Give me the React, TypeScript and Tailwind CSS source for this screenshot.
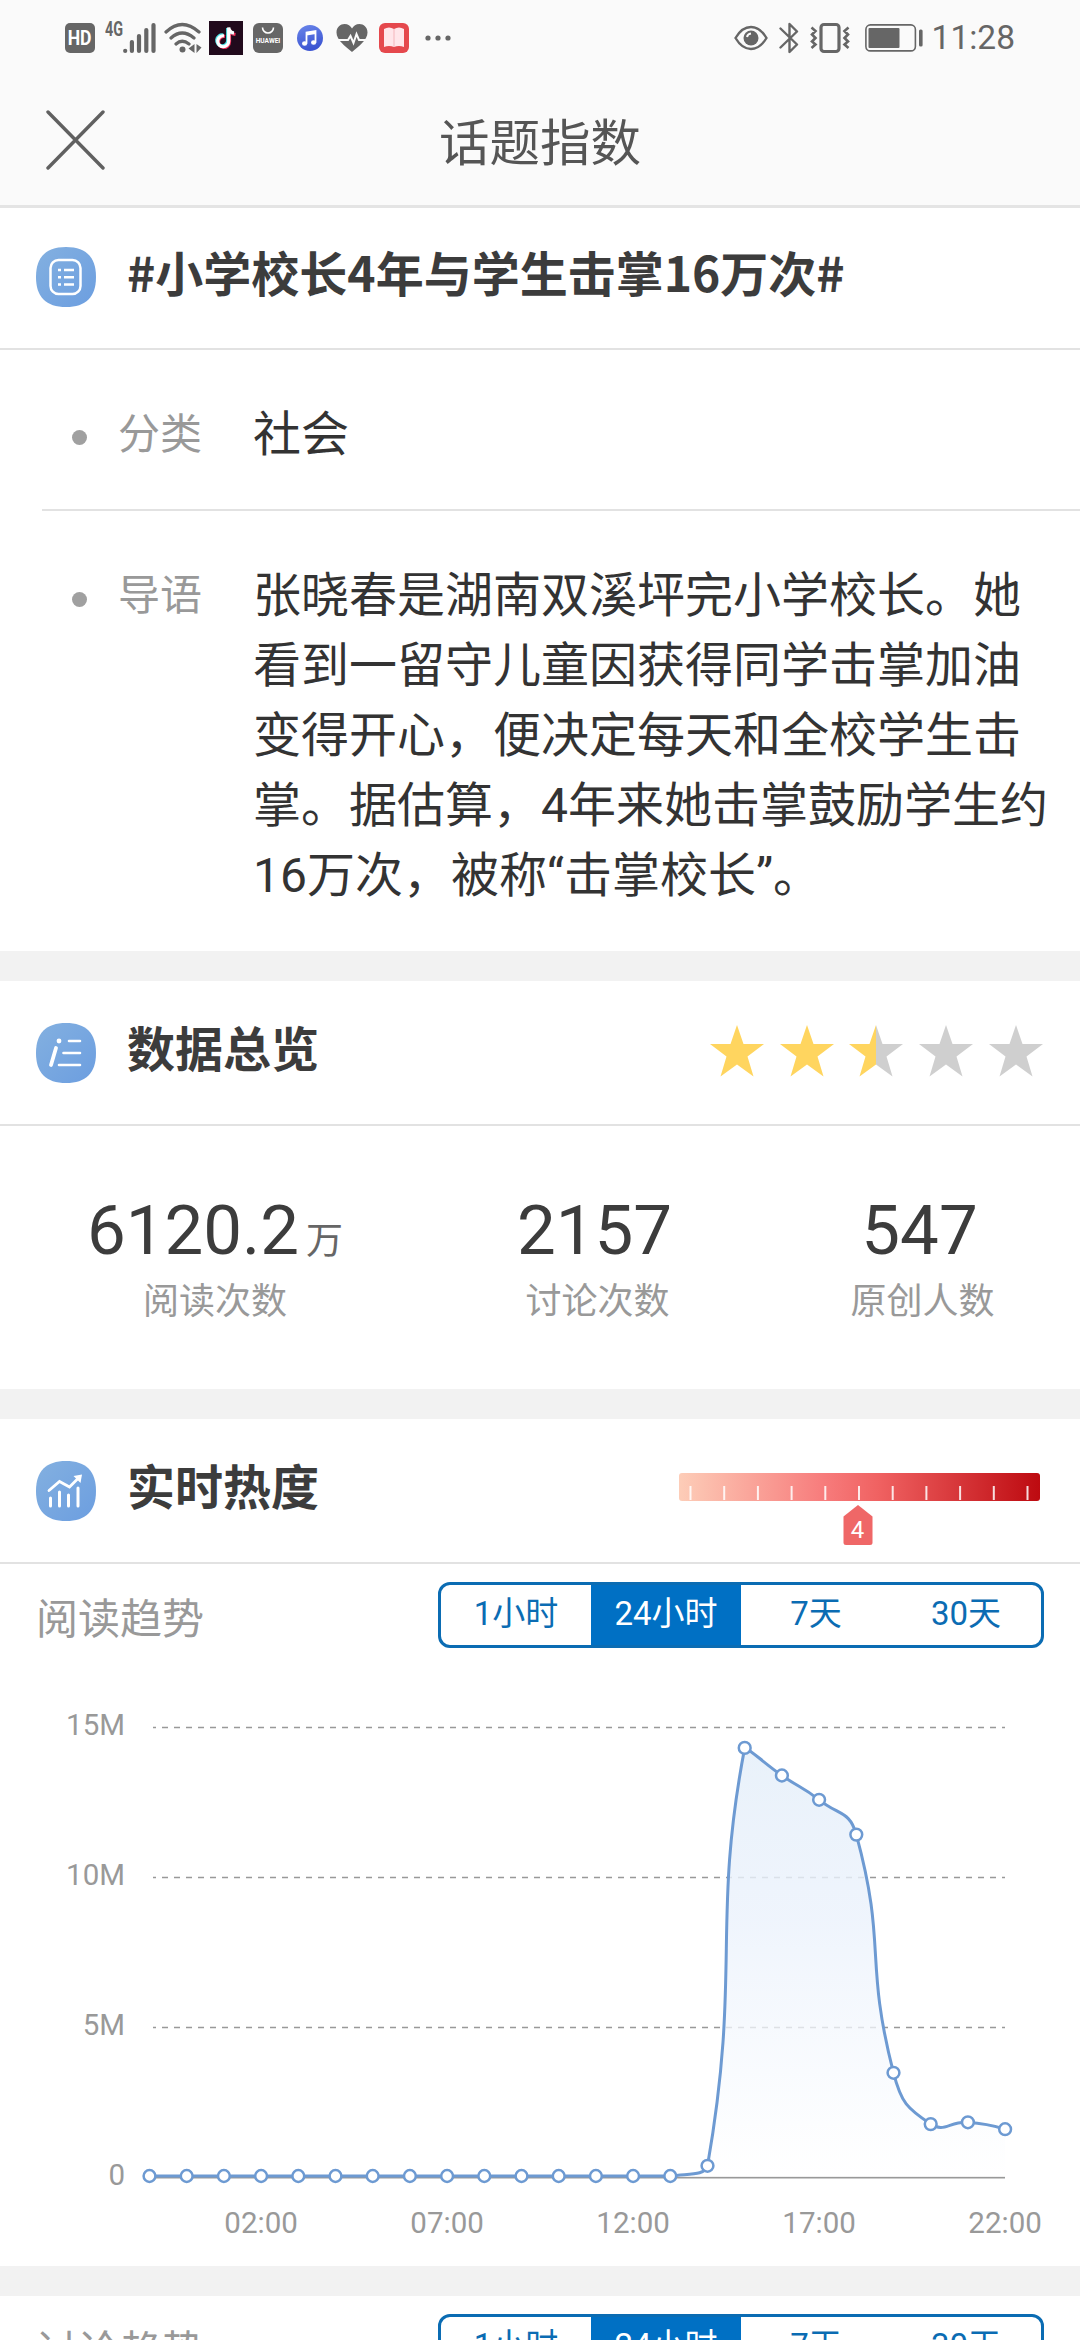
import type {FC, ReactNode} from "react";
import clsx from "clsx";

type Point = {x: number; y: number};

type SectionHeaderProps = {
	icon: ReactNode;
	title: string;
	titleClassName?: string;
	children?: ReactNode;
};

type TrendProps = {
	title: string;
	selected: string;
};

const RANGES = ["1小时", "24小时", "7天", "30天"];

const STATS = [
	{value: "6120.2", unit: "万", label: "阅读次数", width: "w-[430px]"},
	{value: "2157", unit: "", label: "讨论次数", width: "w-[335px]"},
	{value: "547", unit: "", label: "原创人数", width: "w-[315px]"},
];

const STARS = [1, 1, 0.5, 0, 0];

const INTRO = [
	"张晓春是湖南双溪坪完小学校长。她",
	"看到一留守儿童因获得同学击掌加油",
	"变得开心，便决定每天和全校学生击",
	"掌。据估算，4年来她击掌鼓励学生约",
	"16万次，被称“击掌校长”。",
];

// reads per hour, in millions
const READS = [
	0, 0, 0, 0, 0, 0, 0, 0, 0, 0, 0, 0, 0, 0, 0, 0.34, 14.27, 13.35, 12.54,
	11.38, 3.44, 1.73, 1.79, 1.56,
];

const X_LABELS = [
	{text: "02:00", index: 3},
	{text: "07:00", index: 8},
	{text: "12:00", index: 13},
	{text: "17:00", index: 18},
	{text: "22:00", index: 23},
];

const Y_LABELS = [
	{text: "15M", value: 15},
	{text: "10M", value: 10},
	{text: "5M", value: 5},
	{text: "0", value: 0},
];

// Smoothed line; control points stay between the lowest and highest value.
const smoothPath = (pts: Point[], smooth = 0.5) => {
	const top = Math.min(...pts.map((p) => p.y));
	const bottom = Math.max(...pts.map((p) => p.y));
	const limit = (y: number) => Math.max(top, Math.min(bottom, y));

	let d = `M${pts[0].x} ${pts[0].y}`;
	let out = pts[0];
	for (let i = 1; i < pts.length; i++) {
		const prev = pts[i - 1];
		const cur = pts[i];
		const next = pts[i + 1];
		let into = cur;
		let nextOut = cur;
		if (next) {
			const vx = (next.x - prev.x) * smooth;
			const vy = (next.y - prev.y) * smooth;
			const lenPrev = Math.hypot(cur.x - prev.x, cur.y - prev.y);
			const lenNext = Math.hypot(next.x - cur.x, next.y - cur.y);
			const before = lenPrev / (lenPrev + lenNext);
			const after = lenNext / (lenPrev + lenNext);
			into = {x: cur.x - vx * before, y: limit(cur.y - vy * before)};
			nextOut = {x: cur.x + vx * after, y: limit(cur.y + vy * after)};
		}
		d += `C${out.x} ${out.y} ${into.x} ${into.y} ${cur.x} ${cur.y}`;
		out = nextOut;
	}
	return d;
};

const StatusBar: FC = () => {
	return (
		<div className="flex h-[76px] items-center pl-[65px] pr-[65px] text-[#666]">
			<div className="flex h-[30px] w-[30px] items-center justify-center rounded-[5px] bg-[#666] font-['Roboto',sans-serif] text-[20px] font-bold leading-none text-white">
				<span className="scale-x-[0.88]">HD</span>
			</div>
			<span className="mb-[18px] ml-[10px] w-[18px] font-['Roboto',sans-serif] text-[20px] font-bold leading-none">
				<span className="inline-block origin-left scale-x-[0.72]">4G</span>
			</span>
			<svg width="33" height="32" viewBox="0 0 33 32" stroke="currentColor" strokeWidth="4.2" strokeLinecap="round">
				<path d="M2.2 28.8v.2M8.9 20v9M16 14v15M23.3 8v21M30.5 3v26" />
			</svg>
			<svg className="ml-2" width="39" height="32" viewBox="0 0 39 32" fill="none" stroke="currentColor" strokeWidth="3.2" strokeLinecap="round">
				<path d="M2 10Q18 -5 35 10M7 16Q18 6 30 16M12 22Q18 16.5 25 22" />
				<circle cx="18.5" cy="27.5" r="3" fill="currentColor" stroke="none" />
				<path d="M30.5 22v9l-6-4.500zM32.500 22v9l5-5.500z" fill="currentColor" stroke="none" />
			</svg>
			<svg className="ml-[6px]" width="34" height="34" viewBox="0 0 34 34">
				<rect width="34" height="34" fill="#210a1c" />
				<g fill="none" strokeWidth="3.2">
					<path d="M16 15.500a5.500 5.500 0 1 0 4.500 5.500V8.500q1 4.500 6 5" stroke="#f0305a" />
					<path d="M14.200 14a5.500 5.500 0 1 0 4.500 5.500V7q1 4.500 6 5" stroke="#4fe3e6" />
					<path d="M15 14.800a5.500 5.500 0 1 0 4.700 5.300V6.500q1 5 5.300 5.500" stroke="#fff" />
				</g>
			</svg>
			<svg className="ml-[10px]" width="30" height="30" viewBox="0 0 30 30">
				<rect width="30" height="30" rx="6" fill="#666" />
				<path d="M9.500 4.500a5.500 5.500 0 0 0 11 0" fill="none" stroke="#fff" strokeWidth="1.600" />
				<text x="15" y="20" fontSize="6.600" fontWeight="700" textAnchor="middle" fill="#fff" fontFamily="Roboto, sans-serif">
					HUAWEI
				</text>
			</svg>
			<svg className="ml-[14px]" width="26" height="26" viewBox="0 0 26 26">
				<defs>
					<linearGradient id="music" x1="0" y1="0" x2="0.300" y2="1">
						<stop offset="0" stopColor="#6a86ea" />
						<stop offset="1" stopColor="#3c55d2" />
					</linearGradient>
				</defs>
				<circle cx="13" cy="13" r="13" fill="url(#music)" />
				<path d="M9.500 18.500V7.500l9-1.500v11.500M9.500 9.500l9-1.500" fill="none" stroke="#fff" strokeWidth="1.800" />
				<ellipse cx="7.600" cy="18.500" rx="2.600" ry="2.200" fill="#fff" />
				<ellipse cx="16.600" cy="17.500" rx="2.600" ry="2.200" fill="#fff" />
			</svg>
			<svg className="ml-[13px]" width="32" height="30" viewBox="0 0 32 30">
				<path d="M16 29C9 23 .5 17 .5 9.500C.5 4 4.500 1 8.500 1C12 1 14.500 3 16 5.500C17.500 3 20 1 23.500 1C27.500 1 31.500 4 31.500 9.500C31.500 17 23 23 16 29Z" fill="currentColor" />
				<path d="M1 17h11l2.500-4 3 7 3-9 2.500 6h8" fill="none" stroke="#fafafa" strokeWidth="2" />
			</svg>
			<svg className="ml-[11px]" width="30" height="30" viewBox="0 0 30 30">
				<rect width="30" height="30" rx="6" fill="#e5484d" />
				<path d="M5 6q5-3 10 0q5-3 10 0v18q-5-2-10 0q-5-2-10 0z" fill="#ffe6ea" />
				<path d="M15 6v18" stroke="#f4b6bc" strokeWidth="1" />
			</svg>
			<svg className="ml-4" width="26" height="6" viewBox="0 0 26 6" fill="currentColor">
				<circle cx="3" cy="3" r="2.600" />
				<circle cx="13" cy="3" r="2.600" />
				<circle cx="23" cy="3" r="2.600" />
			</svg>
			<div className="ml-auto flex items-center">
				<svg width="34" height="26" viewBox="0 0 34 26" fill="none" stroke="currentColor" strokeWidth="2.400">
					<path d="M1.500 13Q8 2 17 2T32.500 13Q26 24 17 24T1.500 13Z" />
					<circle cx="17" cy="13" r="7.500" fill="currentColor" stroke="none" />
					<path d="M13 12q.5-3 4-3.500" stroke="#fafafa" strokeWidth="2" />
				</svg>
				<svg className="ml-[11px]" width="20" height="32" viewBox="0 0 20 32" fill="none" stroke="currentColor" strokeWidth="2.400" strokeLinejoin="round" strokeLinecap="round">
					<path d="M1.500 6.500L18 22.500L10.500 30V2L18 9.500L1.500 25.500" />
				</svg>
				<svg className="ml-[11px]" width="40" height="32" viewBox="0 0 40 32" fill="none" stroke="currentColor" strokeWidth="3.200">
					<rect x="11" y="2.500" width="18" height="27" rx="3" />
					<path d="M1.500 5.500l4 3.500-3.500 3.500 3.500 3.500-3.500 3.500 3.500 3-4 3.500M38.500 5.500l-4 3.500 3.500 3.500-3.500 3.500 3.500 3.500-3.500 3 4 3.500" strokeWidth="2.600" />
				</svg>
				<svg className="ml-[15px]" width="58" height="28" viewBox="0 0 58 28">
					<rect x=".9" y=".9" width="49.500" height="26" rx="4.500" fill="none" stroke="currentColor" strokeWidth="1.600" />
					<rect x="3.500" y="4" width="31" height="20" rx="1" fill="currentColor" />
					<rect x="54" y="5.500" width="3.600" height="17" rx="1.500" fill="currentColor" />
				</svg>
				<span className="ml-[9px] font-['Roboto',sans-serif] text-[33.500px] leading-none">11:28</span>
			</div>
		</div>
	);
};

const IconBadge: FC<{id: string; children: ReactNode}> = ({id, children}) => {
	return (
		<svg width="60" height="60" viewBox="0 0 60 60" fill="none" stroke="#fff">
			<defs>
				<linearGradient id={id} x1="0" y1="0" x2="1" y2="1">
					<stop offset="0" stopColor="#83b0e0" />
					<stop offset="1" stopColor="#6c9ee0" />
				</linearGradient>
			</defs>
			<path d="M30 0C50 0 60 10 60 30S50 60 30 60S0 50 0 30S10 0 30 0Z" fill={`url(#${id})`} stroke="none" />
			{children}
		</svg>
	);
};

const SectionHeader: FC<SectionHeaderProps> = ({
	icon,
	title,
	titleClassName = "mb-[4px]",
	children,
}) => {
	return (
		<div className="flex h-[145px] items-center border-b-2 border-[#e2e2e2] pl-9 pr-9">
			{icon}
			<h2
				className={clsx(
					"ml-[31px] text-[48px] font-bold leading-none text-[#3c3c3c]",
					titleClassName,
				)}
			>
				{title}
			</h2>
			{children}
		</div>
	);
};

const Star: FC<{fill: number; id: string}> = ({fill, id}) => {
	return (
		<svg width="56" height="52" viewBox="0 0 56 52">
			<defs>
				<linearGradient id={id}>
					<stop offset={fill} stopColor="#ffd55f" />
					<stop offset={fill} stopColor="#cfcfcf" />
				</linearGradient>
			</defs>
			<path
				d="M28 0L34.500 19H55L38.500 31.500L44.500 51.500L28 39.500L11.500 51.500L17.500 31.500L1 19H21.500Z"
				fill={`url(#${id})`}
			/>
		</svg>
	);
};

const HeatBar: FC = () => {
	return (
		<svg className="ml-auto mt-[40px]" width="365" height="76" viewBox="0 0 365 76">
			<defs>
				<linearGradient id="heat">
					<stop offset="0" stopColor="#fdcdb8" />
					<stop offset=".4" stopColor="#f77c7c" />
					<stop offset=".55" stopColor="#f06262" />
					<stop offset="1" stopColor="#bd0a10" />
				</linearGradient>
			</defs>
			<rect width="361" height="28" rx="3" fill="url(#heat)" />
			{Array.from({length: 11}, (_, i) => (
				<rect key={i} x={10.500 + i * 33.700} y="13" width="2" height="14" fill="#fff" opacity=".85" />
			))}
			<path
				d="M179 32L193.500 43.500V69.500Q193.500 72 191 72H167Q164.500 72 164.500 69.500V43.500Z"
				fill="#ef6767"
			/>
			<text x="178.500" y="65" fontSize="24" textAnchor="middle" fill="#fff" fontFamily="Roboto, sans-serif">
				4
			</text>
		</svg>
	);
};

const TrendHeader: FC<TrendProps> = ({title, selected}) => {
	return (
		<div className="flex items-start pl-9 pr-9 pt-[18px]">
			<span className="mt-[17px] text-[42px] leading-[42px] text-[#999]">{title}</span>
			<div className="ml-auto flex h-[66px] w-[606px] overflow-hidden rounded-[12px] border-[3px] border-[#0b6cb3]">
				{RANGES.map((range) => (
					<button
						key={range}
						type="button"
						className={clsx(
							"flex-1 pb-[3px] text-[33px] leading-none",
							range === selected
								? "bg-[#0070c4] text-white"
								: "text-[#0b6cb3]",
						)}
					>
						{range}
					</button>
				))}
			</div>
		</div>
	);
};

const TrendChart: FC = () => {
	const left = 149.500;
	const step = 37.200;
	const base = 529;
	const points = READS.map((v, i) => ({x: left + i * step, y: base - 1 - v * 30}));
	const line = smoothPath(points);

	return (
		<svg className="block" width="1080" height="618" viewBox="0 0 1080 618">
			<defs>
				<linearGradient id="area" x1="0" y1="0" x2="0" y2="1">
					<stop offset="0" stopColor="#e5eff9" stopOpacity=".85" />
					<stop offset=".4" stopColor="#ebf2fc" stopOpacity=".8" />
					<stop offset="1" stopColor="#ffffff" stopOpacity=".7" />
				</linearGradient>
			</defs>
			{Y_LABELS.map(({text, value}) => (
				<g key={text}>
					<text
						x="125"
						y={base + 7.500 - value * 30}
						fontSize="29.500"
						textAnchor="end"
						fill="#999"
						fontFamily="Roboto, sans-serif"
					>
						{text}
					</text>
					<path
						d={`M153 ${base + 0.500 - value * 30}H1005`}
						stroke="#999"
						strokeWidth={value === 0 ? 2 : 1.500}
						strokeDasharray={value === 0 ? undefined : "6 6"}
						strokeDashoffset="3"
					/>
				</g>
			))}
			<path d={`${line}V${base}H${left}Z`} fill="url(#area)" />
			<path d={line} fill="none" stroke="#6d9ad2" strokeWidth="3" strokeLinejoin="bevel" />
			{points.map((p) => (
				<circle key={p.x} cx={p.x} cy={p.y} r="5.900" fill="#fff" stroke="#6d9ad2" strokeWidth="2.500" />
			))}
			{X_LABELS.map(({text, index}) => (
				<text
					key={text}
					x={left + index * step}
					y="585"
					fontSize="29.500"
					textAnchor="middle"
					fill="#999"
					fontFamily="Roboto, sans-serif"
				>
					{text}
				</text>
			))}
		</svg>
	);
};

const Gap: FC = () => <div className="h-[30px] bg-[#f2f2f2]" />;

const App: FC = () => {
	return (
		<div className="h-[2340px] w-[1080px] overflow-hidden bg-white font-['Roboto','Noto_Sans_CJK_SC',sans-serif]">
			<header className="h-[208px] border-b-[3px] border-[#e4e4e4] bg-[#fafafa]">
				<StatusBar />
				<div className="grid h-[128px] grid-cols-[1fr_auto_1fr] items-center">
					<svg className="ml-[46px]" width="59" height="60" viewBox="0 0 59 60" stroke="#606060" strokeWidth="3.400" strokeLinecap="round">
						<path d="M2 2l55 56M57 2L2 58" />
					</svg>
					<h1 className="pt-[9px] text-[50.500px] leading-none text-[#555]">话题指数</h1>
				</div>
			</header>

			<div className="-mt-[3px]">
				<SectionHeader
					title="#小学校长4年与学生击掌16万次#"
					titleClassName="mb-[12px] font-['Noto_Sans_CJK_SC',sans-serif]"
					icon={
						<IconBadge id="badge-topic">
							<rect x="14.500" y="13" width="30" height="34" rx="8" strokeWidth="2.500" />
							<path d="M28 23h10M28 30.200h10M28 37.500h10M22 23h3M22 30.200h3M22 37.500h3" strokeWidth="2.600" />
						</IconBadge>
					}
				/>
			</div>
			<div className="ml-[42px] flex h-[161px] items-center border-b-2 border-[#e2e2e2] pl-[30px] pt-[11px]">
				<span className="mt-1 h-[15px] w-[15px] rounded-full bg-[#a0a0a0]" />
				<span className="ml-[31px] text-[42px] leading-none text-[#999]">分类</span>
				<span className="ml-[51px] text-[48px] leading-none text-[#333]">社会</span>
			</div>
			<div className="flex h-[440px] pl-[72px] pt-[50px]">
				<span className="mt-[31px] h-[15px] w-[15px] rounded-full bg-[#a0a0a0]" />
				<span className="ml-[31px] text-[42px] leading-[70px] text-[#999]">导语</span>
				<p className="ml-[51px] text-[48px] leading-[70px] text-[#333]">
					{INTRO.map((text) => (
						<span key={text} className="block whitespace-nowrap">
							{text}
						</span>
					))}
				</p>
			</div>

			<Gap />
			<SectionHeader
				title="数据总览"
				icon={
					<IconBadge id="badge-data">
						<path d="M33 18h11M27.500 30h16.500M23 42h21" strokeWidth="2.600" strokeLinecap="round" />
						<path d="M20 25L15 42" strokeWidth="3.800" strokeLinecap="round" />
						<circle cx="23" cy="18" r="2.400" fill="#fff" stroke="none" />
					</IconBadge>
				}
			>
				<div className="mb-[4px] ml-auto flex gap-[13.800px]">
					{STARS.map((fill, i) => (
						<Star key={i} fill={fill} id={`star-${i}`} />
					))}
				</div>
			</SectionHeader>
			<div className="flex h-[263px] pt-[63px]">
				{STATS.map(({value, unit, label, width}) => (
					<div key={label} className={clsx("flex flex-col items-center", width)}>
						<div className="flex h-[84px] items-baseline">
							<span className={clsx("text-[69px] leading-[84px] text-[#3c3c3c]", !unit && "mr-[6px]")}>
								{value}
							</span>
							{unit && <span className="ml-[7px] text-[37px] leading-none text-[#666]">{unit}</span>}
						</div>
						<span className="mt-[11px] text-[36px] leading-[36px] text-[#999]">{label}</span>
					</div>
				))}
			</div>

			<Gap />
			<SectionHeader
				title="实时热度"
				icon={
					<IconBadge id="badge-heat">
						<path d="M14.500 37v8M23.500 31v14M32.500 34v11M42 27v18" strokeWidth="3" strokeLinecap="round" />
						<path d="M13 29.500L23.500 20.500L33.500 26L42.500 17" strokeWidth="2.800" strokeLinecap="round" />
						<path d="M37.500 15L46 13.500L44.500 22Z" fill="#fff" stroke="none" />
					</IconBadge>
				}
			>
				<HeatBar />
			</SectionHeader>
			<TrendHeader title="阅读趋势" selected="24小时" />
			<TrendChart />

			<Gap />
			<TrendHeader title="讨论趋势" selected="24小时" />
		</div>
	);
};

export default App;
